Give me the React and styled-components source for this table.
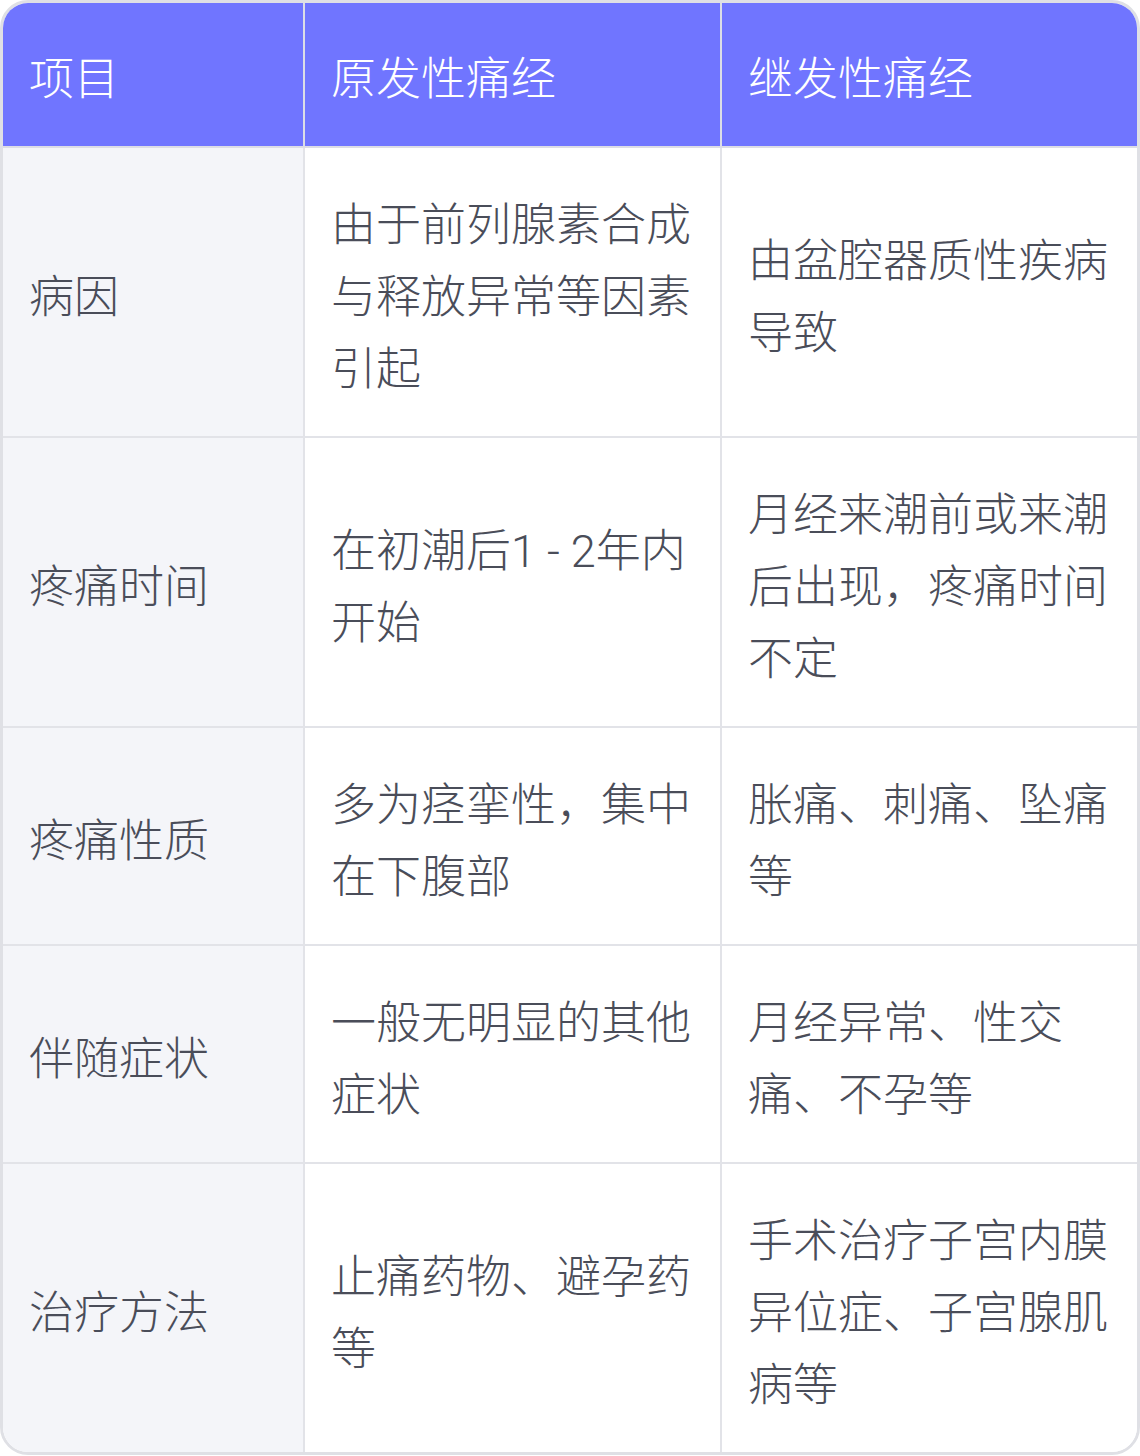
import React from "react";
import styled, { createGlobalStyle } from "styled-components";

const Global = createGlobalStyle`
  html, body { margin: 0; padding: 0; background: #ffffff; }
  * { box-sizing: border-box; }
`;

const Wrapper = styled.div`
  width: 1140px;
  border: 3px solid #dfe0e5;
  border-radius: 28px;
  overflow: hidden;
  background: #ffffff;
`;

const Table = styled.table`
  width: 100%;
  border-collapse: separate;
  border-spacing: 0;
  table-layout: fixed;
  font-family: "Roboto", "Noto Sans CJK SC", "Noto Sans", sans-serif;
  font-weight: 300;
  font-size: 45px;
  line-height: 72px;
`;

const HeadCell = styled.th`
  background: #7075ff;
  color: #ffffff;
  font-weight: 300;
  text-align: left;
  padding: 41px 24px 30px 26px;
  border-right: ${(p) => (p.$last ? "none" : "2px solid #dcdde6")};
  border-bottom: 2px solid #dcdde6;
  white-space: nowrap;
`;

const Cell = styled.td`
  background: ${(p) => (p.$label ? "#f4f5f9" : "#ffffff")};
  color: #4a4d59;
  text-align: left;
  vertical-align: middle;
  padding: 42px 24px 30px 26px;
  border-right: ${(p) => (p.$last ? "none" : "2px solid #e2e3e8")};
  border-bottom: ${(p) => (p.$bottom ? "none" : "2px solid #e2e3e8")};
  word-break: break-all;
`;

const rows = [
  ["病因", "由于前列腺素合成与释放异常等因素引起", "由盆腔器质性疾病导致"],
  ["疼痛时间", "在初潮后1 - 2年内开始", "月经来潮前或来潮后出现，疼痛时间不定"],
  ["疼痛性质", "多为痉挛性，集中在下腹部", "胀痛、刺痛、坠痛等"],
  ["伴随症状", "一般无明显的其他症状", "月经异常、性交痛、不孕等"],
  ["治疗方法", "止痛药物、避孕药等", "手术治疗子宫内膜异位症、子宫腺肌病等"],
];

export default function App() {
  return (
    <>
      <Global />
      <Wrapper>
        <Table>
          <colgroup>
            <col style={{ width: "302px" }} />
            <col style={{ width: "417px" }} />
            <col />
          </colgroup>
          <thead>
            <tr>
              <HeadCell>项目</HeadCell>
              <HeadCell>原发性痛经</HeadCell>
              <HeadCell $last>继发性痛经</HeadCell>
            </tr>
          </thead>
          <tbody>
            {rows.map((r, i) => (
              <tr key={i}>
                <Cell $label $bottom={i === rows.length - 1}>{r[0]}</Cell>
                <Cell $bottom={i === rows.length - 1}>{r[1]}</Cell>
                <Cell $last $bottom={i === rows.length - 1}>{r[2]}</Cell>
              </tr>
            ))}
          </tbody>
        </Table>
      </Wrapper>
    </>
  );
}
